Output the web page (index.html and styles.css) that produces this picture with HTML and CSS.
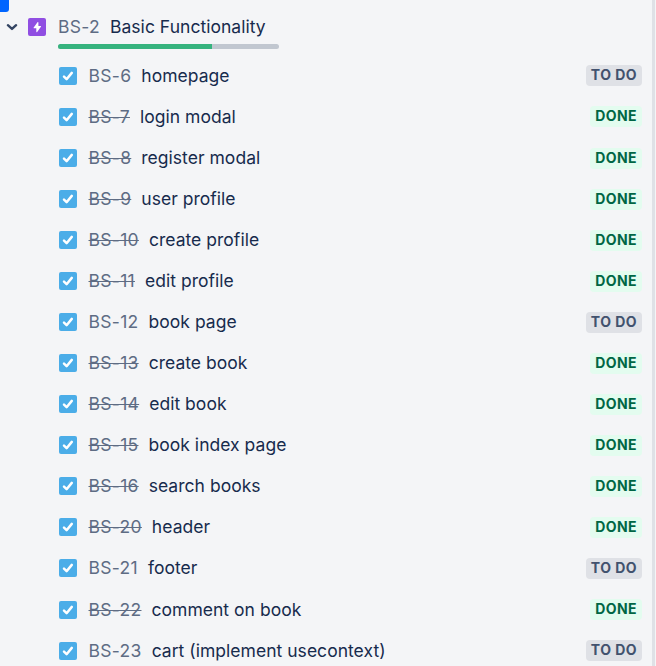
FILE: index.html
```html
<!DOCTYPE html>
<html lang="en">
<head>
<meta charset="utf-8">
<title>Roadmap</title>
<link rel="stylesheet" href="styles.css">
</head>
<body>
<svg class="defs" aria-hidden="true">
  <symbol id="task" viewBox="0 0 18 18"><rect width="18" height="18" rx="2" fill="#4bade8"/><path d="M5 9.7l2.6 2.5L12.8 5.9" fill="none" stroke="#fff" stroke-width="2.5" stroke-linecap="round" stroke-linejoin="round"/></symbol>
</svg>
<div class="corner"></div>
<main class="panel">
  <header class="epic">
    <svg class="chevron" viewBox="0 0 12 8"><path d="M1.9 2.2L6 5.9l4.1-3.7" fill="none" stroke="#344563" stroke-width="2.4" stroke-linecap="round" stroke-linejoin="round"/></svg>
    <svg class="icon epic-icon" viewBox="0 0 18 18"><rect width="18" height="18" rx="2" fill="#904ee2"/><path d="M9.5 4.2c.4-.5.9-.3.9.2V8h2.1c.5 0 .7.4.4.8l-3.7 5.1c-.4.5-.9.3-.9-.2V10.200H6.100c-.5 0-.7-.4-.4-.8z" fill="#fff"/></svg>
    <div class="epic-body">
      <div class="epic-name"><span class="key">BS-2</span><span class="title">Basic Functionality</span></div>
      <div class="progress"><div class="progress-done"></div></div>
    </div>
  </header>
  <ul class="issues">
    <li><svg class="icon"><use href="#task"/></svg><span class="key">BS-6</span><span class="title">homepage</span><span class="status todo">TO DO</span></li>
    <li><svg class="icon"><use href="#task"/></svg><span class="key closed">BS-7</span><span class="title">login modal</span><span class="status done">DONE</span></li>
    <li><svg class="icon"><use href="#task"/></svg><span class="key closed">BS-8</span><span class="title">register modal</span><span class="status done">DONE</span></li>
    <li><svg class="icon"><use href="#task"/></svg><span class="key closed">BS-9</span><span class="title">user profile</span><span class="status done">DONE</span></li>
    <li><svg class="icon"><use href="#task"/></svg><span class="key closed">BS-10</span><span class="title">create profile</span><span class="status done">DONE</span></li>
    <li><svg class="icon"><use href="#task"/></svg><span class="key closed">BS-11</span><span class="title">edit profile</span><span class="status done">DONE</span></li>
    <li><svg class="icon"><use href="#task"/></svg><span class="key">BS-12</span><span class="title">book page</span><span class="status todo">TO DO</span></li>
    <li><svg class="icon"><use href="#task"/></svg><span class="key closed">BS-13</span><span class="title">create book</span><span class="status done">DONE</span></li>
    <li><svg class="icon"><use href="#task"/></svg><span class="key closed">BS-14</span><span class="title">edit book</span><span class="status done">DONE</span></li>
    <li><svg class="icon"><use href="#task"/></svg><span class="key closed">BS-15</span><span class="title">book index page</span><span class="status done">DONE</span></li>
    <li><svg class="icon"><use href="#task"/></svg><span class="key closed">BS-16</span><span class="title">search books</span><span class="status done">DONE</span></li>
    <li><svg class="icon"><use href="#task"/></svg><span class="key closed">BS-20</span><span class="title">header</span><span class="status done">DONE</span></li>
    <li><svg class="icon"><use href="#task"/></svg><span class="key">BS-21</span><span class="title">footer</span><span class="status todo">TO DO</span></li>
    <li><svg class="icon"><use href="#task"/></svg><span class="key closed">BS-22</span><span class="title">comment on book</span><span class="status done">DONE</span></li>
    <li><svg class="icon"><use href="#task"/></svg><span class="key">BS-23</span><span class="title">cart (implement usecontext)</span><span class="status todo">TO DO</span></li>
  </ul>
</main>
</body>
</html>
```
FILE: styles.css
```css
* { box-sizing: border-box; }
body {
  margin: 0;
  height: 666px;
  overflow: hidden;
  background: #f4f5f7;
  font: 17.5px/24px Inter, "Liberation Sans", sans-serif;
  letter-spacing: 0.03px;
  color: #172b4d;
}
.defs { position: absolute; width: 0; height: 0; }
.corner {
  position: absolute;
  top: 0;
  left: 0;
  width: 9px;
  height: 12px;
  background: #0065ff;
  border-radius: 0 0 3px 0;
}
.panel {
  width: 655px;
  height: 666px;
  overflow: hidden;
  border-right: 3px solid #dfe1e6;
}
.epic {
  display: flex;
  align-items: flex-start;
  height: 55.4px;
  padding: 15px 0 0 6px;
}
.chevron { width: 12px; height: 8px; margin: 8px 10px 0 0; }
.icon { flex: none; width: 18px; height: 18px; }
.epic-icon { margin: 3px 12px 0 0; }
.epic-name { display: flex; gap: 10px; }
.progress {
  width: 221px;
  height: 5px;
  margin-top: 5px;
  border-radius: 2.5px;
  overflow: hidden;
  background: #c1c7d0;
}
.progress-done { width: 69.8%; height: 100%; background: #36b37e; }
.issues { margin: 0; padding: 0; list-style: none; }
.issues li {
  display: flex;
  align-items: center;
  height: 41.05px;
  padding: 0 10px 0 59px;
}
.issues .key { margin: 0 10px 0 11.5px; }
.key { color: #5e6c84; letter-spacing: 0.3px; }
.closed { text-decoration: line-through; text-decoration-thickness: 1px; }
.title { white-space: nowrap; }
.status {
  margin-left: auto;
  height: 21px;
  padding: 0 5px;
  border-radius: 4px;
  font-size: 14px;
  line-height: 20px;
  font-weight: 700;
  letter-spacing: 0.45px;
}
.todo { background: #dfe1e6; color: #42526e; }
.done { background: #e3fcef; color: #006644; }
```
